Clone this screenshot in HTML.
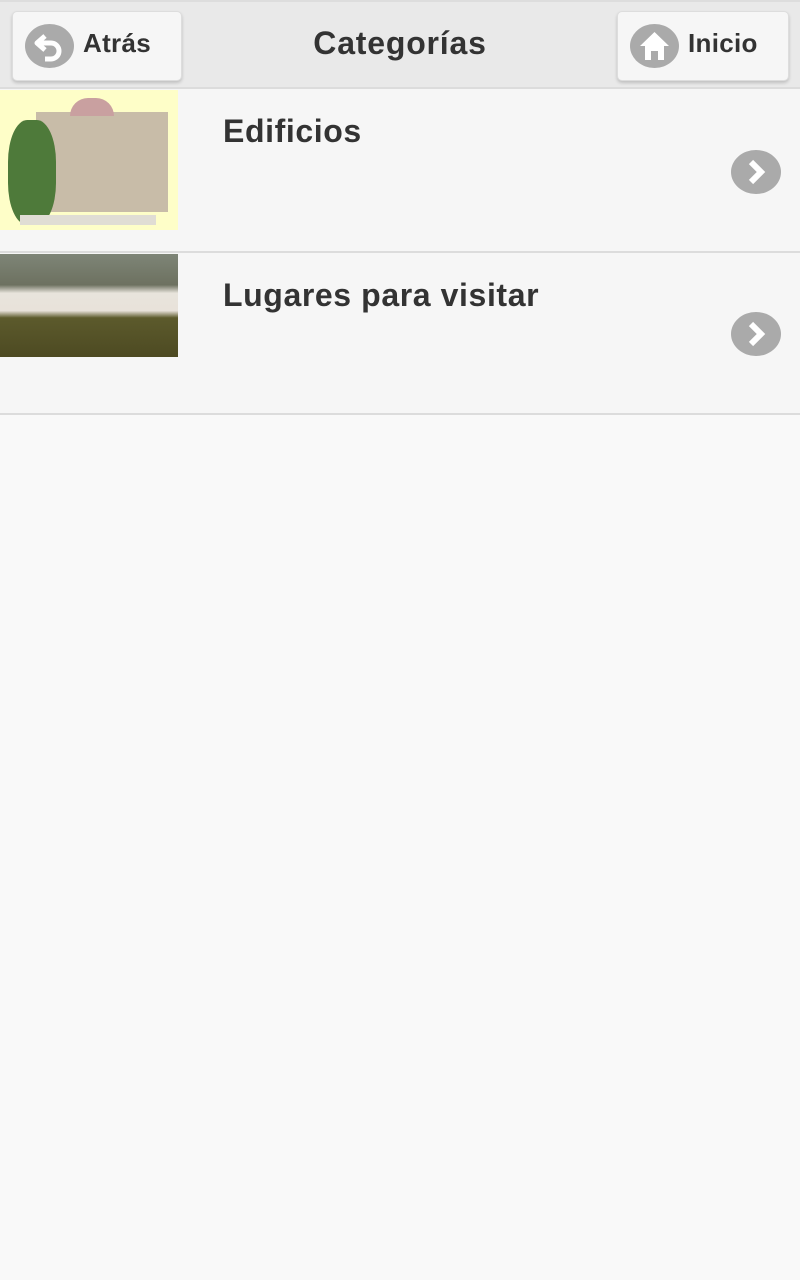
<!DOCTYPE html>
<html><head><meta charset="utf-8"><style>
body{margin:0;width:800px;height:1280px;background:#f9f9f9;font-family:"Liberation Sans",sans-serif;position:relative;overflow:hidden}
.hdr{position:absolute;left:0;top:0;width:800px;height:89px;background:#e9e9e9;border-top:2px solid #ddd;border-bottom:2px solid #dcdcdc;box-sizing:border-box}
.btn{position:absolute;top:9px;height:70px;background:#f6f6f6;border:1px solid #ddd;border-radius:5px;box-shadow:0 2px 3px rgba(0,0,0,.18);box-sizing:border-box}
.btn span{position:absolute;top:16px;font-size:26px;font-weight:bold;color:#333;letter-spacing:0.3px}
.ic{position:absolute;left:12px;top:12px;width:49px;height:44px;border-radius:50%;background:#aaa}
h1{position:absolute;top:23px;left:0;width:800px;text-align:center;margin:0;font-size:32px;font-weight:bold;color:#333;letter-spacing:0.8px}
.item{position:absolute;left:0;width:800px;background:#f6f6f6;border-bottom:2px solid #dcdcdc}
.item .t{position:absolute;left:223px;top:24px;font-size:32px;font-weight:bold;color:#333;letter-spacing:0.6px}
.arr{position:absolute;left:731px;width:50px;height:44px;border-radius:50%;background:#aaa}
</style></head><body>
<div class="hdr">
<div class="btn" style="left:12px;width:170px"><div class="ic"><svg width="49" height="44" viewBox="0 0 49 44"><path d="M20 12 L12 19 L20 26" fill="none" stroke="#fff" stroke-width="5" stroke-linejoin="round"/><path d="M13 19 H26 A8 8 0 0 1 26 35 H20" fill="none" stroke="#fff" stroke-width="5"/></svg></div><span style="left:70px">Atrás</span></div>
<h1>Categorías</h1>
<div class="btn" style="left:617px;width:172px"><div class="ic"><svg width="49" height="44" viewBox="0 0 49 44"><path d="M24.5 8 L39 22 H34 V36 H15 V22 H10 Z" fill="#fff"/><rect x="21" y="27" width="7" height="9" fill="#aaa"/></svg></div><span style="left:70px">Inicio</span></div>
</div>
<div class="item" style="top:89px;height:162px">
<div style="position:absolute;left:0;top:1px;width:178px;height:140px;background:#fefec8">
<div style="position:absolute;left:36px;top:22px;width:132px;height:100px;background:#c8bca8"></div>
<div style="position:absolute;left:70px;top:8px;width:44px;height:18px;background:#c9a0a0;border-radius:20px 20px 0 0"></div>
<div style="position:absolute;left:8px;top:30px;width:48px;height:105px;background:#4e7a3a;border-radius:40%"></div>
<div style="position:absolute;left:20px;top:125px;width:136px;height:10px;background:#e0ddd4"></div>
</div>
<div class="t">Edificios</div>
<div class="arr" style="top:61px"><svg width="50" height="44" viewBox="0 0 50 44"><path d="M20 12 L30 22 L20 32" fill="none" stroke="#fff" stroke-width="6"/></svg></div>
</div>
<div class="item" style="top:253px;height:160px">
<div style="position:absolute;left:0;top:1px;width:178px;height:103px;background:linear-gradient(#7e8577 0%,#6d7160 30%,#e8e4dc 38%,#e8e2da 55%,#5c5a2c 62%,#4d4a22 100%)"></div>
<div class="t">Lugares para visitar</div>
<div class="arr" style="top:59px"><svg width="50" height="44" viewBox="0 0 50 44"><path d="M20 12 L30 22 L20 32" fill="none" stroke="#fff" stroke-width="6"/></svg></div>
</div>
</body></html>
